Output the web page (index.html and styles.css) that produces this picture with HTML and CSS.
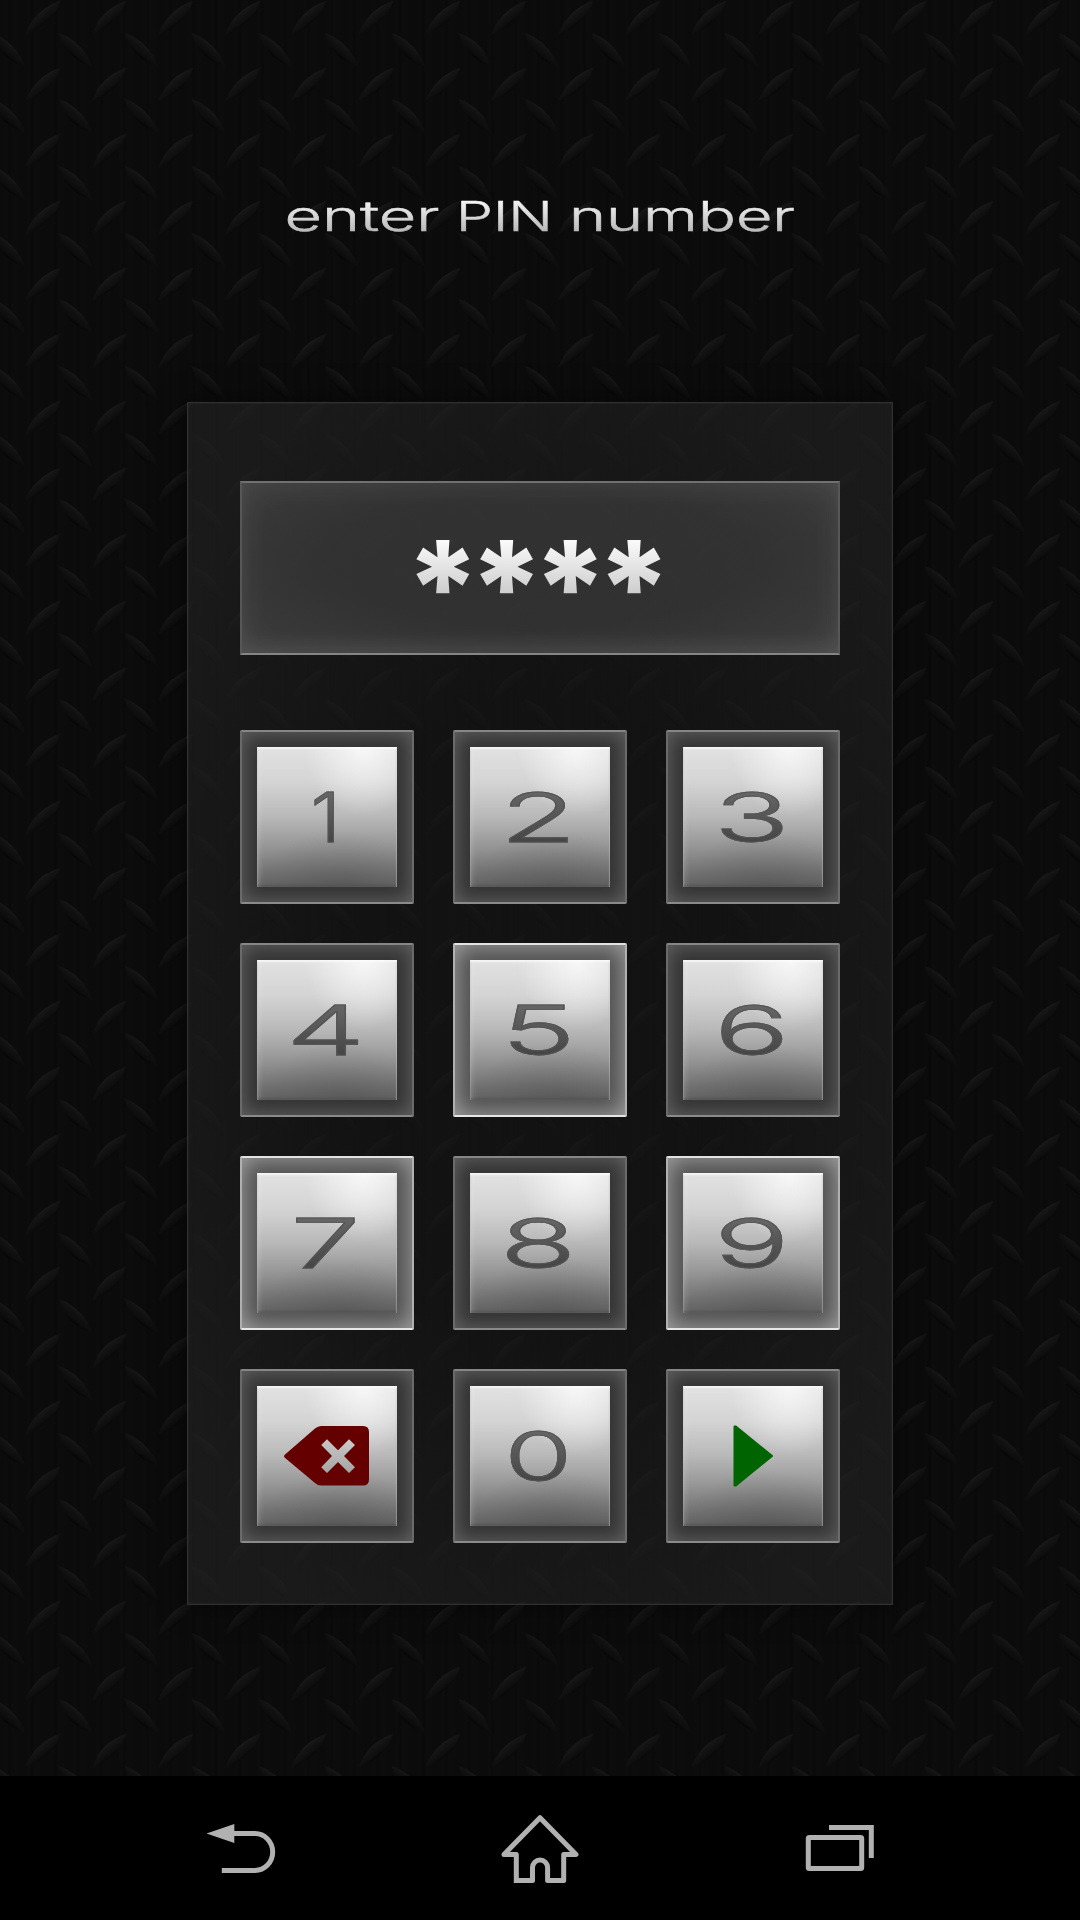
FILE: index.html
```html
<!DOCTYPE html>
<html lang="en">
<head>
<meta charset="utf-8">
<title>Enter PIN number</title>
<link rel="stylesheet" href="styles.css">
</head>
<body>
<main class="screen">
  <svg class="title" width="520" height="60" viewBox="280 185 520 60" role="heading">
    <defs>
      <linearGradient id="silver" gradientUnits="userSpaceOnUse" x1="0" y1="200" x2="0" y2="232">
        <stop offset="0" stop-color="#f6f6f6"/><stop offset="1" stop-color="#b8b8b8"/>
      </linearGradient>
    </defs>
    <g fill="url(#silver)" stroke="url(#silver)" stroke-width=".5">
      <text x="284.500" y="231" textLength="155" lengthAdjust="spacingAndGlyphs">enter</text>
      <text x="456" y="231" textLength="97" lengthAdjust="spacingAndGlyphs">PIN</text>
      <text x="569" y="231" textLength="226" lengthAdjust="spacingAndGlyphs">number</text>
    </g>
  </svg>

  <section class="panel">
    <div class="display"><span class="mask">****</span></div>
    <div class="keypad">
      <button class="key"><span class="face"><span class="digit one">1</span></span></button>
      <button class="key"><span class="face"><span class="digit">2</span></span></button>
      <button class="key"><span class="face"><span class="digit">3</span></span></button>
      <button class="key"><span class="face"><span class="digit">4</span></span></button>
      <button class="key lit"><span class="face"><span class="digit">5</span></span></button>
      <button class="key"><span class="face"><span class="digit">6</span></span></button>
      <button class="key lit"><span class="face"><span class="digit">7</span></span></button>
      <button class="key"><span class="face"><span class="digit">8</span></span></button>
      <button class="key lit"><span class="face"><span class="digit">9</span></span></button>
      <button class="key" aria-label="Delete"><span class="face">
        <svg width="140" height="140" viewBox="0 -.5 140 140">
          <path fill="#640000" fill-rule="evenodd" d="M27.500 68.500 L58 42 Q61 39.500 64 39.500 H106 Q112 39.500 112 45.500 V93 Q112 99 106 99 H64 Q61 99 58 96.500 L27.500 71 Q26.500 69.700 27.500 68.500 Z M64.200 58.500 L70 52.700 L81 63.700 L92 52.700 L98 58.500 L87 69.500 L98 80.700 L92 86.500 L81 75.500 L70 86.500 L64.200 80.700 L75 69.500 Z"/>
        </svg></span></button>
      <button class="key"><span class="face"><span class="digit zero">0</span></span></button>
      <button class="key" aria-label="Confirm"><span class="face">
        <svg width="140" height="140" viewBox="-.5 -.5 140 140">
          <path fill="#006400" stroke="#006400" stroke-width="2" stroke-linejoin="round" d="M51 40 H52.300 L88.500 69.500 L52.300 99 H51 Z"/>
        </svg></span></button>
    </div>
  </section>
</main>

<nav class="navbar">
  <svg width="680" height="80" viewBox="200 1805 680 80" fill="none" stroke="#b1b1b1" stroke-width="5">
    <path d="M234 1833.500 H255 A17.700 18.500 0 0 1 255 1870.500 H221.800"/>
    <path fill="#b1b1b1" stroke="none" d="M206.500 1833.500 L234.300 1824 V1843 Z"/>
    <path stroke-linejoin="round" d="M516.300 1883 V1854.500 H504 L540 1817.700 L576 1854.500 H563.700 V1880.500 H547.600 V1867.500 A7.500 7.500 0 0 0 532.500 1867.500 V1880.500 H516.300"/>
    <rect x="808.300" y="1837.500" width="53.400" height="31" rx="1"/>
    <path d="M829 1827.500 H871.300 V1858"/>
  </svg>
</nav>
</body>
</html>
```
FILE: styles.css
```css
* { box-sizing: border-box; }

body {
  margin: 0;
  width: 1080px;
  height: 1920px;
  display: flex;
  flex-direction: column;
  background: #000;
  font-family: "Inter", "Roboto", sans-serif;
}

.screen {
  height: 1776px;
  padding-top: 185px;
  display: flex;
  flex-direction: column;
  align-items: center;
  background:
    url("data:image/svg+xml,%3Csvg xmlns='http://www.w3.org/2000/svg' viewBox='0 0 66.667 66.667'%3E%3Cdefs%3E%3ClinearGradient id='a' x1='.32' y1='.28' x2='.68' y2='.72'%3E%3Cstop stop-color='%23202020'/%3E%3Cstop offset='.35' stop-color='%23141414'/%3E%3Cstop offset='.65' stop-color='%230e0e0e'/%3E%3Cstop offset='1' stop-color='%23000'/%3E%3C/linearGradient%3E%3ClinearGradient id='b' x1='.68' y1='.28' x2='.32' y2='.72'%3E%3Cstop stop-color='%231e1e1e'/%3E%3Cstop offset='.4' stop-color='%23111'/%3E%3Cstop offset='.65' stop-color='%230d0d0d'/%3E%3Cstop offset='1' stop-color='%23000'/%3E%3C/linearGradient%3E%3C/defs%3E%3Cpath fill='url(%23a)' d='M25 34.500 Q34 10 60 .5 Q53 24 25 34.500Z'/%3E%3Cg fill='url(%23b)'%3E%3Cpath d='M58 32.500 Q82 41 92.500 67 Q67 60 58 32.500Z'/%3E%3Cpath d='M-8.667 32.500 Q15.333 41 25.833 67 Q.333 60 -8.667 32.500Z'/%3E%3C/g%3E%3C/svg%3E") 0 0 / 66.667px 66.667px,
    repeating-linear-gradient(90deg, #0b0b0b 0 3px, #0c0c0c 5px 7px, #0a0a0a 9px 10px, #0c0c0c 12px 17px, #0b0b0b 19px 23px);
}

.title {
  flex: none;
  font-size: 41px;
  font-weight: 300;
}

.panel {
  width: 706px;
  height: 1203px;
  margin-top: 157px;
  padding: 78px 52px 0;
  display: flex;
  flex-direction: column;
  gap: 75px;
  border: 1px solid #303030;
  background:
    radial-gradient(ellipse 62% 58% at 50% 50%, rgba(22, 22, 22, .65) 45%, rgba(32, 32, 32, .7) 100%);
  box-shadow: inset 0 0 3px rgba(255, 255, 255, .08), 0 0 26px rgba(0, 0, 0, .5);
}

.display {
  height: 174px;
  display: flex;
  justify-content: center;
  border: 2px solid;
  border-color: #707070 #575757 #858585;
  background: radial-gradient(ellipse at 50% 45%, rgba(56, 56, 56, .8) 50%, rgba(70, 70, 70, .8) 100%);
  box-shadow: inset 0 0 32px rgba(255, 255, 255, .09), inset 0 -10px 16px rgba(255, 255, 255, .04);
}

.mask {
  height: 172px;
  line-height: 210px;
  margin-right: 15px;
  padding-right: 12px;
  margin-left: 12px;
  font-size: 130px;
  font-weight: 800;
  letter-spacing: -12px;
  background: linear-gradient(#fff 30%, #ccc 65%);
  -webkit-background-clip: text;
  background-clip: text;
  color: transparent;
}

.keypad {
  display: grid;
  grid-template-columns: repeat(3, 174px);
  grid-auto-rows: 174px;
  gap: 39px;
}

.key {
  padding: 15px;
  border: 2px solid;
  border-color: #868686 #6a6a6a #8a8a8a;
  border-radius: 2px;
  background: #343434;
  box-shadow: inset 0 0 20px rgba(255, 255, 255, .26);
  font-family: inherit;
}

.key.lit {
  border-color: #e2e2e2 #b0b0b0 #e6e6e6;
  background: #505050;
  box-shadow: inset 0 0 24px rgba(255, 255, 255, .52);
}

.face {
  width: 140px;
  height: 140px;
  display: flex;
  align-items: center;
  justify-content: center;
  background:
    radial-gradient(ellipse 42% 50% at 76% 0, rgba(255, 255, 255, .75), rgba(255, 255, 255, 0)),
    radial-gradient(ellipse 60% 40% at 60% 100%, rgba(60, 60, 60, .28), rgba(60, 60, 60, 0)),
    linear-gradient(#e2e2e2 0, #d4d4d4 25%, #b8b8b8 50%, #949494 72%, #727272 90%, #626262 100%);
  box-shadow: inset 0 2px 2px rgba(255, 255, 255, .65), inset 3px 0 5px rgba(255, 255, 255, .15), inset -1px 0 1px rgba(255, 255, 255, .15), inset 0 -2px 2px rgba(60, 60, 60, .5);
}

.face svg { flex: none; }

.digit {
  margin-left: -3px;
  font-size: 69px;
  font-weight: 300;
  line-height: 140px;
  transform: scaleX(1.82);
  background: linear-gradient(#666 32%, #454545 68%);
  -webkit-background-clip: text;
  background-clip: text;
  color: transparent;
  -webkit-text-stroke: .8px #545454;
}

.digit.one { transform: scaleX(1.1); }
.digit.zero { transform: scaleX(1.6); }

.navbar {
  height: 144px;
  display: flex;
  justify-content: center;
  padding-top: 29px;
}
```
